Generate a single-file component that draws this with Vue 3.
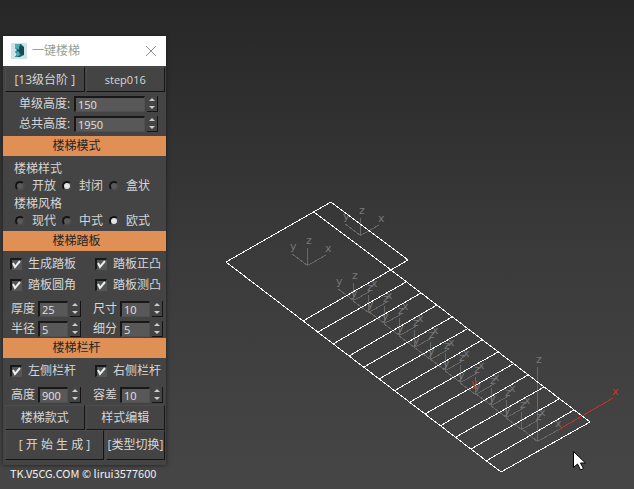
<script setup>
import { ref, reactive } from 'vue'

const totals = reactive([
  { id: 'step-height', label: '单级高度:', value: '150' },
  { id: 'total-height', label: '总共高度:', value: '1950' }
])

const modes = reactive([
  { id: 'style', label: '楼梯样式', options: ['开放', '封闭', '盒状'], value: '封闭' },
  { id: 'flavour', label: '楼梯风格', options: ['现代', '中式', '欧式'], value: '欧式' }
])

const treadChecks = reactive([
  { label: '生成踏板', on: true },
  { label: '踏板正凸', on: true },
  { label: '踏板圆角', on: true },
  { label: '踏板测凸', on: true }
])
const treadFields = reactive([
  { id: 'thickness', label: '厚度', value: '25' },
  { id: 'size', label: '尺寸', value: '10' },
  { id: 'radius', label: '半径', value: '5' },
  { id: 'segments', label: '细分', value: '5' }
])
const railChecks = reactive([
  { label: '左侧栏杆', on: true },
  { label: '右侧栏杆', on: true }
])
const railFields = reactive([
  { id: 'rail-height', label: '高度', value: '900' },
  { id: 'tolerance', label: '容差', value: '10' }
])

const open = ref(true)
const nudge = (field, by) => {
  field.value = String(Number(field.value) + by)
}

// Wireframe: thirteen treads below a landing
const treads = Array.from({ length: 12 }, (_, i) => {
  const n = i + 1
  return {
    x1: Math.round(302.7 + n * 15.28),
    y1: Math.round(320.7 + n * 11.66),
    x2: Math.round(390.7 + n * 15.28),
    y2: Math.round(270 + n * 11.7)
  }
})
const gizmos = [
  { x: 307, y: 265 },
  { x: 360, y: 235 },
  ...Array.from({ length: 12 }, (_, i) => ({
    x: Math.round(353 + i * 15.3),
    y: Math.round(300 + i * 11.7)
  }))
]
</script>

<template>
  <main class="viewport">
    <svg class="scene" viewBox="0 0 634 489" preserveAspectRatio="xMinYMin meet" aria-hidden="true">
      <g class="axes">
        <g v-for="(g, i) in gizmos" :key="i" :transform="`translate(${g.x} ${g.y})`">
          <path d="M.5 -17V.5L-15 -11M.5 .5L19 -10" />
          <text x="-1" y="-21">z</text>
          <text x="-17" y="-15">y</text>
          <text x="18" y="-13">x</text>
        </g>
        <path d="M537.5 367V441.5L522 429M537.5 441.5L558 430" />
        <text x="536" y="363">z</text>
        <text x="536" y="420">z</text>
        <text x="555" y="427">x</text>
      </g>
      <g class="wire">
        <path d="M226 262L331 202L408 260L303 321M314 212L391 270L590 422L501 472L226 262" />
        <line v-for="(t, i) in treads" :key="i" :x1="t.x1" :y1="t.y1" :x2="t.x2" :y2="t.y2" />
      </g>
      <g class="active">
        <path d="M558 430L613 398" />
        <text x="612" y="395">x</text>
        <text x="471" y="387">y</text>
      </g>
      <path class="cursor" d="M573.5 451.5V467.5L577.5 464L580.5 470L583.5 468.5L580.5 463H585.5Z" />
    </svg>

    <div class="dock">
      <section v-if="open" class="panel">
        <header class="title">
          <svg class="logo" viewBox="0 0 16 16" aria-hidden="true">
            <rect width="16" height="16" fill="#cfe2e6" />
            <path d="M4 1H10L13 4V12L9 14H4L6 11L4 9L6 7L4 5Z" fill="#17606c" />
            <path d="M4 1H9L8 5L9 7L4 5ZM5 8L8 9L9 12L5 14L6 11Z" fill="#49b0ba" />
            <path d="M9 3L13 4V12L10 11L8 7Z" fill="#154b59" />
          </svg>
          <h1>一键楼梯</h1>
          <button class="close" aria-label="关闭" @click="open = false">
            <svg viewBox="0 0 12 12"><path d="M1 1L11 11M11 1L1 11" /></svg>
          </button>
        </header>

        <div class="pair">
          <button class="push">[13级台阶 ]</button>
          <button class="push latin">step016</button>
        </div>

        <div class="totals">
          <div v-for="f in totals" :key="f.id" class="field wide">
            <label :for="f.id">{{ f.label }}</label>
            <input :id="f.id" v-model="f.value" type="text" />
            <span class="spin">
              <button aria-label="+" @click="nudge(f, 1)"><i class="up"></i></button>
              <button aria-label="-" @click="nudge(f, -1)"><i class="down"></i></button>
            </span>
          </div>
        </div>

        <h2>楼梯模式</h2>
        <div class="modes">
          <fieldset v-for="m in modes" :key="m.id">
            <legend>{{ m.label }}</legend>
            <div class="radios">
              <label v-for="o in m.options" :key="o">
                <input v-model="m.value" type="radio" :name="m.id" :value="o" />{{ o }}
              </label>
            </div>
          </fieldset>
        </div>

        <h2>楼梯踏板</h2>
        <div class="checks">
          <label v-for="c in treadChecks" :key="c.label">
            <span class="tick">
              <input v-model="c.on" type="checkbox" />
              <svg v-if="c.on" viewBox="0 0 12 12"><path d="M3 5L5 9L10 3" /></svg>
            </span>{{ c.label }}
          </label>
        </div>
        <div class="fields">
          <div v-for="f in treadFields" :key="f.id" class="field">
            <label :for="f.id">{{ f.label }}</label>
            <input :id="f.id" v-model="f.value" type="text" />
            <span class="spin">
              <button aria-label="+" @click="nudge(f, 1)"><i class="up"></i></button>
              <button aria-label="-" @click="nudge(f, -1)"><i class="down"></i></button>
            </span>
          </div>
        </div>

        <h2>楼梯栏杆</h2>
        <div class="checks">
          <label v-for="c in railChecks" :key="c.label">
            <span class="tick">
              <input v-model="c.on" type="checkbox" />
              <svg v-if="c.on" viewBox="0 0 12 12"><path d="M3 5L5 9L10 3" /></svg>
            </span>{{ c.label }}
          </label>
        </div>
        <div class="fields">
          <div v-for="f in railFields" :key="f.id" class="field">
            <label :for="f.id">{{ f.label }}</label>
            <input :id="f.id" v-model="f.value" type="text" />
            <span class="spin">
              <button aria-label="+" @click="nudge(f, 1)"><i class="up"></i></button>
              <button aria-label="-" @click="nudge(f, -1)"><i class="down"></i></button>
            </span>
          </div>
        </div>

        <div class="pair">
          <button class="push">楼梯款式</button>
          <button class="push">样式编辑</button>
        </div>
        <div class="pair actions">
          <button class="push">[ 开 始 生 成 ]</button>
          <button class="push">[类型切换]</button>
        </div>
      </section>
      <p class="credit">TK.V5CG.COM © lirui3577600</p>
    </div>
  </main>
</template>

<style>
body {
  background: #444;
}
</style>

<style scoped>
.viewport {
  position: relative;
  min-height: 100vh;
  overflow: hidden;
  background: linear-gradient(#272727, #3a3a3a 50%, #464646);
  color: #d6d6d6;
  font: 12px/16px "Open Sans", "Noto Sans CJK SC", sans-serif;
}
.scene {
  position: absolute;
  inset: 0;
  width: 100%;
  height: 100%;
}
.wire {
  fill: none;
  stroke: #fff;
  stroke-width: 1;
  shape-rendering: crispEdges;
}
.axes path,
.active path {
  fill: none;
  stroke: #686868;
  shape-rendering: crispEdges;
}
.axes text,
.active text {
  fill: #777;
  font: 11px "DejaVu Sans", sans-serif;
}
.active path {
  stroke: #c0312b;
}
.active text {
  fill: #d0332b;
}
.cursor {
  fill: #fff;
  stroke: #000;
}
.dock {
  position: absolute;
  left: 3px;
  top: 36px;
  width: 163px;
}
.panel {
  background: #444;
  padding-bottom: 5px;
  box-shadow: 0 0 4px #1c1c1c;
}
.title {
  display: flex;
  align-items: center;
  height: 30px;
  padding: 0 9px 0 8px;
  gap: 5px;
  background: #fff;
}
.logo {
  width: 16px;
  height: 16px;
}
h1,
h2,
p {
  margin: 0;
  font-weight: 400;
}
h1 {
  flex: 1;
  color: #96a096;
  font-size: 12px;
}
button {
  padding: 0;
  border: 0;
  background: none;
  color: inherit;
  font: inherit;
}
.close {
  display: flex;
}
.close svg {
  width: 12px;
  height: 12px;
  fill: none;
  stroke: #8c938c;
}
.pair {
  display: grid;
  grid-template-columns: 1fr 1fr;
  gap: 1px;
  padding: 1px 1px 0 2px;
}
.push {
  height: 25px;
  border: 1px solid #4c4c4c;
  border-right-color: #151515;
  border-bottom-color: #151515;
  white-space: nowrap;
}
.latin {
  font-size: 11px;
}
.actions {
  grid-template-columns: 99px 1fr;
  gap: 2px;
  padding-top: 0;
}
.actions .push {
  height: 30px;
}
.totals {
  display: grid;
  gap: 4px;
  padding: 4px 8px 4px 16px;
}
.field {
  display: flex;
  align-items: center;
  height: 16px;
}
.field label {
  flex: none;
  width: 27px;
}
.wide label {
  width: 55px;
}
.field input {
  flex: 1;
  width: 0;
  min-width: 0;
  height: 16px;
  box-sizing: border-box;
  padding: 0 0 0 2px;
  border: solid;
  border-color: #181818 #505050 #505050 #181818;
  border-width: 2px 1px 1px 2px;
  background: #585858;
  color: #e2e2e2;
  font: inherit;
  font-size: 11px;
  line-height: 13px;
  outline: 0;
}
.spin {
  display: grid;
  width: 11px;
  height: 16px;
  margin-left: 2px;
  box-sizing: border-box;
  border: solid #151515;
  border-width: 0 1px 1px 0;
}
.spin button {
  display: grid;
  place-items: center;
}
.spin i {
  border: solid transparent;
  border-width: 0 3px;
}
.spin .up {
  border-bottom: 3px solid #ccc;
}
.spin .down {
  border-top: 3px solid #ccc;
}
h2 {
  height: 20px;
  padding-right: 16px;
  background: #e08f55;
  color: #252525;
  font-size: 12px;
  line-height: 20px;
  text-align: center;
}
.modes {
  display: grid;
  gap: 1px;
  padding: 5px 0 1px 11px;
}
fieldset {
  min-width: 0;
  margin: 0;
  padding: 0;
  border: 0;
}
legend {
  padding: 0;
}
.radios {
  display: flex;
  height: 18px;
  gap: 5px;
}
.radios label {
  display: flex;
  align-items: center;
}
.radios input {
  appearance: none;
  width: 10px;
  height: 10px;
  margin: 0 7px 0 1px;
  border: 2px solid;
  border-color: #141414 #4a4a4a #4a4a4a #141414;
  border-radius: 50%;
  background: #5a5a5a;
  box-sizing: border-box;
}
.radios input:checked {
  background: #e4e4e4;
}
.checks {
  display: grid;
  grid-template-columns: 85px 1fr;
  row-gap: 5px;
  padding: 5px 0 4px 7px;
}
.checks label {
  display: flex;
  align-items: center;
  height: 16px;
  white-space: nowrap;
}
.tick {
  display: grid;
  width: 12px;
  height: 12px;
  margin-right: 6px;
}
.tick > * {
  grid-area: 1 / 1;
}
.tick input {
  appearance: none;
  width: 12px;
  height: 12px;
  margin: 0;
  box-sizing: border-box;
  border: solid;
  border-width: 2px 1px 1px 2px;
  border-color: #181818 #555 #555 #181818;
  background: #555;
}
.tick svg {
  width: 12px;
  height: 12px;
  fill: none;
  stroke: #e8f0ee;
  stroke-width: 2;
  pointer-events: none;
}
.fields {
  display: grid;
  grid-template-columns: 70px 70px;
  gap: 4px 12px;
  padding: 4px 0 1px 8px;
}
.credit {
  padding-left: 7px;
  color: #f0f0f0;
  font-family: "Noto Sans CJK SC", sans-serif;
  font-size: 11px;
  white-space: nowrap;
}
</style>
